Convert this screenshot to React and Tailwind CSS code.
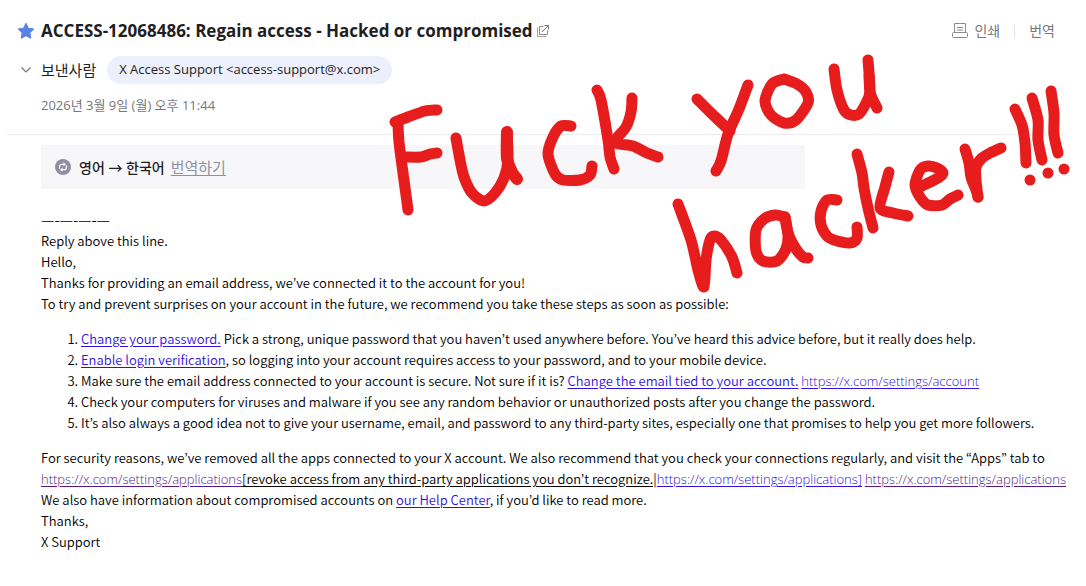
const INK = "#e71d1d";

// Each stroke is a list of points that the pen passed through.
const STROKES = [
  // F
  { w: 11, p: [[395, 122], [408, 117], [425, 111], [437, 110]] },
  { w: 11, p: [[398, 123], [399, 142], [403, 173], [406, 195], [408, 210]] },
  { w: 11, p: [[404, 157], [421, 157], [430, 154], [437, 153]] },
  // u
  { w: 11, p: [[456, 138], [460, 160], [464, 177], [472, 193], [484, 201], [495, 193], [504, 178], [508, 160], [507, 132]] },
  { w: 12, p: [[507, 132], [507, 158], [512, 172], [517, 179]] },
  // c
  { w: 11, p: [[571, 126], [561, 126], [553, 137], [548, 154], [555, 174], [563, 180], [580, 180], [590, 175], [592, 166]] },
  // k
  { w: 11, p: [[597, 90], [601, 100], [608, 140], [610, 157], [614, 169]] },
  { w: 11, p: [[632, 98], [631, 112], [626, 127], [615, 142], [633, 146], [647, 153], [658, 157]] },
  // Y
  { w: 11, p: [[697, 99], [710, 112], [730, 131]] },
  { w: 11, p: [[748, 85], [739, 109], [728, 134], [721, 161], [716, 171]] },
  // o
  { w: 11, p: [[784, 79], [772, 84], [765, 101], [771, 115], [784, 123], [796, 120], [808, 103], [806, 92], [797, 84], [784, 79]] },
  // u
  { w: 11, p: [[834, 69], [837, 90], [844, 110], [851, 115], [859, 114], [866, 103], [870, 91], [868, 60]] },
  { w: 11, p: [[869, 76], [870, 92], [873, 100], [877, 108]] },
  // h
  { w: 11, p: [[678, 204], [691, 240], [698, 270], [704, 287], [706, 260], [710, 240], [714, 236], [721, 240], [732, 257], [737, 273]] },
  // a
  { w: 11, p: [[785, 217], [775, 215], [764, 219], [756, 230], [756, 251], [763, 261], [777, 261], [786, 249], [788, 235], [785, 217]] },
  { w: 11, p: [[785, 217], [788, 233], [796, 249], [803, 257], [808, 258]] },
  // c
  { w: 11, p: [[837, 200], [827, 200], [821, 211], [821, 225], [827, 236], [834, 240], [850, 243], [857, 238], [857, 227]] },
  // k
  { w: 11, p: [[857, 154], [862, 173], [864, 188], [868, 208], [873, 228]] },
  { w: 11, p: [[889, 172], [885, 187], [880, 208], [893, 213], [908, 216]] },
  // e
  { w: 11, p: [[920, 187], [938, 178], [943, 173], [937, 168], [928, 166], [920, 170], [915, 185], [920, 197], [928, 205], [942, 205], [950, 199], [958, 195]] },
  // r
  { w: 11, p: [[965, 149], [969, 163], [971, 177], [976, 190], [978, 197]] },
  { w: 11, p: [[978, 197], [976, 180], [976, 167], [982, 158], [990, 153], [1001, 148]] },
  // ! ! !
  { w: 11, p: [[1015, 109], [1022, 125], [1025, 143], [1026, 163]] },
  { w: 11, p: [[1032, 98], [1038, 120], [1038, 140], [1042, 160]] },
  { w: 11, p: [[1051, 91], [1054, 113], [1054, 135], [1058, 153]] },
  { w: 11, p: [[1030, 180], [1030, 180]] },
  { w: 11, p: [[1048, 173], [1048, 173]] },
  { w: 11, p: [[1064, 169], [1064, 169]] },
];

// Smooth curve through every point of a stroke (Catmull-Rom as cubic Béziers).
function smooth(points) {
  let d = `M${points[0][0]} ${points[0][1]}`;
  for (let i = 0; i < points.length - 1; i++) {
    const a = points[i - 1] || points[i];
    const b = points[i];
    const c = points[i + 1];
    const e = points[i + 2] || c;
    d += `C${b[0] + (c[0] - a[0]) / 7} ${b[1] + (c[1] - a[1]) / 7} ${c[0] - (e[0] - b[0]) / 7} ${c[1] - (e[1] - b[1]) / 7} ${c[0]} ${c[1]}`;
  }
  return d;
}

function Scribble() {
  return (
    <svg
      className="pointer-events-none absolute top-0 left-0"
      width="1086"
      height="300"
      viewBox="0 0 1086 300"
      fill="none"
      stroke={INK}
      strokeLinecap="round"
      strokeLinejoin="round"
      aria-hidden="true"
    >
      {STROKES.map((s, i) => (
        <path key={i} d={smooth(s.p)} strokeWidth={s.w} />
      ))}
    </svg>
  );
}

function StarIcon() {
  return (
    <svg width="18" height="18" viewBox="0 0 18 18" aria-hidden="true">
      <path
        d="M9 1.2l2.4 5 5.4.8-3.9 3.8.9 5.5L9 13.7l-4.8 2.6.9-5.5L1.2 7l5.4-.8z"
        fill="#5b82e6"
        stroke="#5b82e6"
        strokeLinejoin="round"
      />
    </svg>
  );
}

function OpenIcon() {
  return (
    <svg width="12" height="12" viewBox="0 0 12 12" fill="none" aria-hidden="true">
      <path d="M.5 2.500v9h9" stroke="#a3a3a6" />
      <path d="M6.500 1.500h-4v8h8v-4" stroke="#8a8a8d" />
      <path d="M5 7L11 1M7.500.5h4v4" stroke="#77777b" />
    </svg>
  );
}

function PrintIcon() {
  return (
    <svg width="16" height="16" viewBox="0 0 16 16" fill="none" stroke="#8a8a8d" aria-hidden="true">
      <path d="M2.500 9.500v-9h11v9" />
      <rect x=".5" y="9.500" width="15" height="5" rx="1" />
      <path d="M5 4.500h6M5 7h6" />
    </svg>
  );
}

function SwapIcon() {
  return (
    <svg width="16" height="16" viewBox="0 0 16 16" fill="none" aria-hidden="true">
      <circle cx="8" cy="8" r="8" fill="#8f8fa1" />
      <g stroke="#f7f7fa" strokeWidth="1.200">
        <path d="M4.600 9.800V7.300c0-1.300.8-2 2-2h2.600" />
        <path d="M11.400 6.200v2.500c0 1.300-.8 2-2 2H6.800" />
      </g>
      <path d="M8.400 3.200l2.600 2.100-2.600 2.100zM7.600 8.600L5 10.700l2.600 2.100z" fill="#f7f7fa" />
    </svg>
  );
}

const link = "text-[#3111e0] underline underline-offset-2";
const url = "font-['Open_Sans',sans-serif] leading-none font-light underline underline-offset-2";

export default function App() {
  return (
    <div className="relative min-h-screen overflow-x-hidden bg-white pb-6 font-['Open_Sans','Noto_Sans_CJK_KR',sans-serif] text-[13px] text-black">
      <header className="mr-[21px] ml-[7px] border-b border-[#ececee] pt-4.5 pr-2.5 pb-5 pl-2.5">
        <div className="flex items-center">
          <button type="button" aria-label="중요" className="mr-1.5">
            <StarIcon />
          </button>
          <h1 className="text-[17px] leading-[26px] font-bold text-[#1e1e23]">
            ACCESS-12068486: Regain access - Hacked or compromised
          </h1>
          <button type="button" aria-label="새 창으로 보기" className="ml-1">
            <OpenIcon />
          </button>
          <div className="ml-auto flex items-center text-[14px] leading-5 text-[#77777b]">
            <button type="button" className="flex items-center gap-1.5">
              <PrintIcon />
              인쇄
            </button>
            <span className="mx-3.5 h-3.5 w-px bg-[#e4e4e8]" />
            <button type="button">번역</button>
          </div>
        </div>
        <div className="mt-3 flex items-center">
          <button type="button" aria-label="상세 보기" className="flex w-6 pl-1">
            <svg width="10" height="6" viewBox="0 0 10 6" fill="none" stroke="#77777b" strokeWidth="1.200" aria-hidden="true">
              <path d="M.5.5L5 5 9.500.5" />
            </svg>
          </button>
          <span className="text-[15px] leading-5 text-[#1e1e23]">보낸사람</span>
          <button type="button" className="ml-[11px] h-7 rounded-full bg-[#ecf0fc] px-3 text-[#1e1e23]">
            X Access Support &lt;access-support@x.com&gt;
          </button>
        </div>
        <p className="mt-3 pl-6 leading-[18px] text-[#77777b]">2026년 3월 9일 (월) 오후 11:44</p>
      </header>

      <main className="mt-2.5 pl-[41px]">
        <div className="flex h-11 max-w-[764px] items-center bg-[#f7f7fa] pl-3.5">
          <SwapIcon />
          <span className="ml-2 text-[14px] font-medium text-[#1e1e23]">영어 → 한국어</span>
          <button type="button" className="ml-1.5 text-[15px] text-[#8f8fa1] underline underline-offset-2">
            번역하기
          </button>
        </div>

        <div className="mt-5 font-['Noto_Sans_CJK_KR',sans-serif] leading-[21px] font-[350]">
          <p className="text-[15px]">—-—-—-—</p>
          <p>Reply above this line.</p>
          <p>Hello,</p>
          <p>Thanks for providing an email address, we’ve connected it to the account for you!</p>
          <p>To try and prevent surprises on your account in the future, we recommend you take these steps as soon as possible:</p>
          <ol className="my-3.5 list-decimal pl-10">
            <li>
              <a href="#password" className={link}>Change your password.</a> Pick a strong, unique password that you
              haven’t used anywhere before. You’ve heard this advice before, but it really does help.
            </li>
            <li>
              <a href="#verification" className={link}>Enable login verification</a>, so logging into your account
              requires access to your password, and to your mobile device.
            </li>
            <li>
              Make sure the email address connected to your account is secure. Not sure if it is?{" "}
              <a href="#email" className={link}>Change the email tied to your account.</a>{" "}
              <a href="#account" className={`${url} text-[#3111e0]`}>https://x.com/settings/account</a>
            </li>
            <li>
              Check your computers for viruses and malware if you see any random behavior or unauthorized posts after
              you change the password.
            </li>
            <li>
              It’s also always a good idea not to give your username, email, and password to any third-party sites,
              especially one that promises to help you get more followers.
            </li>
          </ol>
          <p>
            For security reasons, we’ve removed all the apps connected to your X account. We also recommend that you
            check your connections regularly, and visit the “Apps” tab to
            <br />
            <a href="#applications" className={`${url} text-[#551a8b]`}>https://x.com/settings/applications</a>
            <u className="underline-offset-2">[revoke access from any third-party applications you don’t recognize.|</u>
            <a href="#applications-link" className={`${url} text-[#3111e0]`}>https://x.com/settings/applications]</a>{" "}
            <a href="#applications" className={`${url} text-[#551a8b]`}>https://x.com/settings/applications</a>
          </p>
          <p>
            We also have information about compromised accounts on <a href="#help" className={link}>our Help Center</a>,
            if you’d like to read more.
          </p>
          <p>Thanks,</p>
          <p>X Support</p>
        </div>
      </main>
      <Scribble />
    </div>
  );
}
